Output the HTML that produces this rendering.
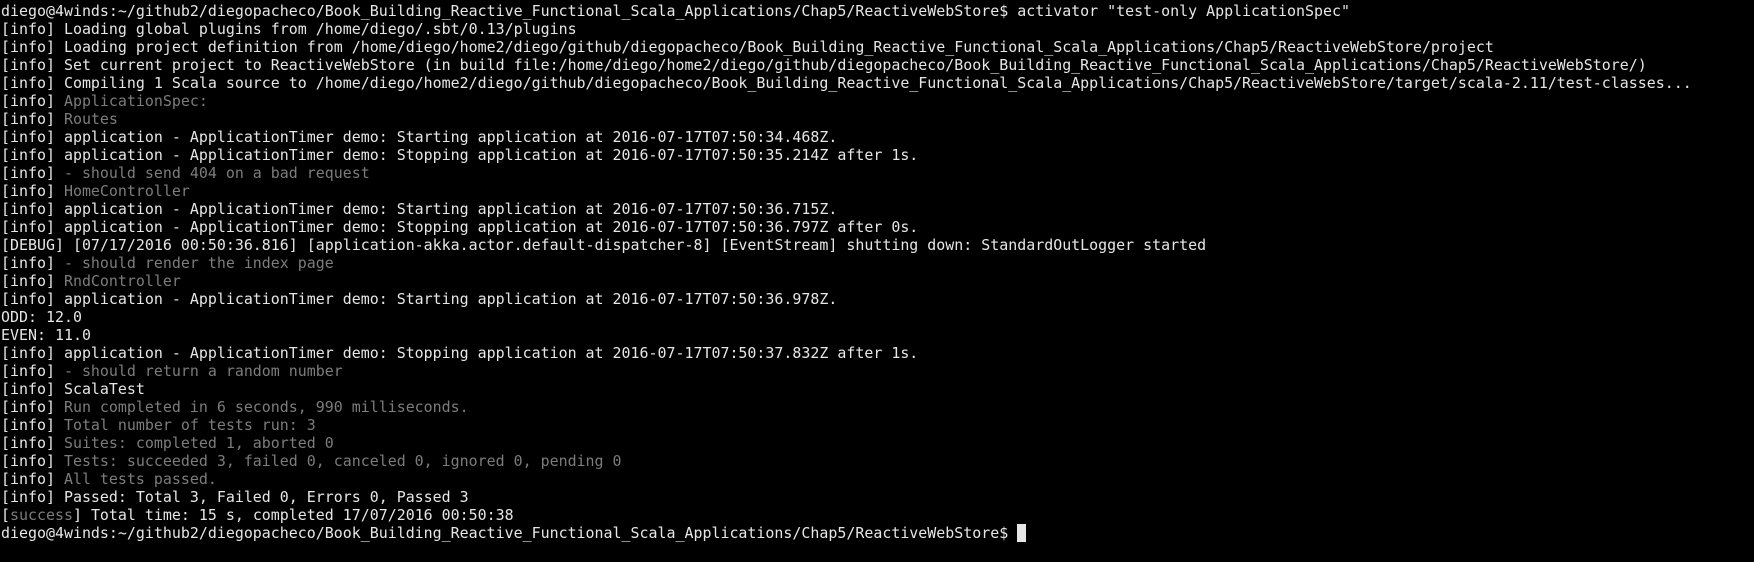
<!DOCTYPE html>
<html><head><style>
html,body{margin:0;padding:0;background:#000;width:1754px;height:562px;overflow:hidden}
pre{margin:0;padding:2px 0 0 1px;font-family:"DejaVu Sans Mono","Liberation Mono",monospace;font-size:14.95px;line-height:18px;color:#e6e6e6;white-space:pre}
.g{color:#7c7c7c}
.c{display:inline-block;width:9px;height:18px;background:#e6e6e6;vertical-align:top}
</style></head><body><pre>diego@4winds:~/github2/diegopacheco/Book_Building_Reactive_Functional_Scala_Applications/Chap5/ReactiveWebStore$ activator "test-only ApplicationSpec"
[info] Loading global plugins from /home/diego/.sbt/0.13/plugins
[info] Loading project definition from /home/diego/home2/diego/github/diegopacheco/Book_Building_Reactive_Functional_Scala_Applications/Chap5/ReactiveWebStore/project
[info] Set current project to ReactiveWebStore (in build file:/home/diego/home2/diego/github/diegopacheco/Book_Building_Reactive_Functional_Scala_Applications/Chap5/ReactiveWebStore/)
[info] Compiling 1 Scala source to /home/diego/home2/diego/github/diegopacheco/Book_Building_Reactive_Functional_Scala_Applications/Chap5/ReactiveWebStore/target/scala-2.11/test-classes...
[info] <span class="g">ApplicationSpec:</span>
[info] <span class="g">Routes</span>
[info] application - ApplicationTimer demo: Starting application at 2016-07-17T07:50:34.468Z.
[info] application - ApplicationTimer demo: Stopping application at 2016-07-17T07:50:35.214Z after 1s.
[info] <span class="g">- should send 404 on a bad request</span>
[info] <span class="g">HomeController</span>
[info] application - ApplicationTimer demo: Starting application at 2016-07-17T07:50:36.715Z.
[info] application - ApplicationTimer demo: Stopping application at 2016-07-17T07:50:36.797Z after 0s.
[DEBUG] [07/17/2016 00:50:36.816] [application-akka.actor.default-dispatcher-8] [EventStream] shutting down: StandardOutLogger started
[info] <span class="g">- should render the index page</span>
[info] <span class="g">RndController</span>
[info] application - ApplicationTimer demo: Starting application at 2016-07-17T07:50:36.978Z.
ODD: 12.0
EVEN: 11.0
[info] application - ApplicationTimer demo: Stopping application at 2016-07-17T07:50:37.832Z after 1s.
[info] <span class="g">- should return a random number</span>
[info] ScalaTest
[info] <span class="g">Run completed in 6 seconds, 990 milliseconds.</span>
[info] <span class="g">Total number of tests run: 3</span>
[info] <span class="g">Suites: completed 1, aborted 0</span>
[info] <span class="g">Tests: succeeded 3, failed 0, canceled 0, ignored 0, pending 0</span>
[info] <span class="g">All tests passed.</span>
[info] Passed: Total 3, Failed 0, Errors 0, Passed 3
[<span class="g">success</span>] Total time: 15 s, completed 17/07/2016 00:50:38
diego@4winds:~/github2/diegopacheco/Book_Building_Reactive_Functional_Scala_Applications/Chap5/ReactiveWebStore$ <span class="c"></span></pre></body></html>
